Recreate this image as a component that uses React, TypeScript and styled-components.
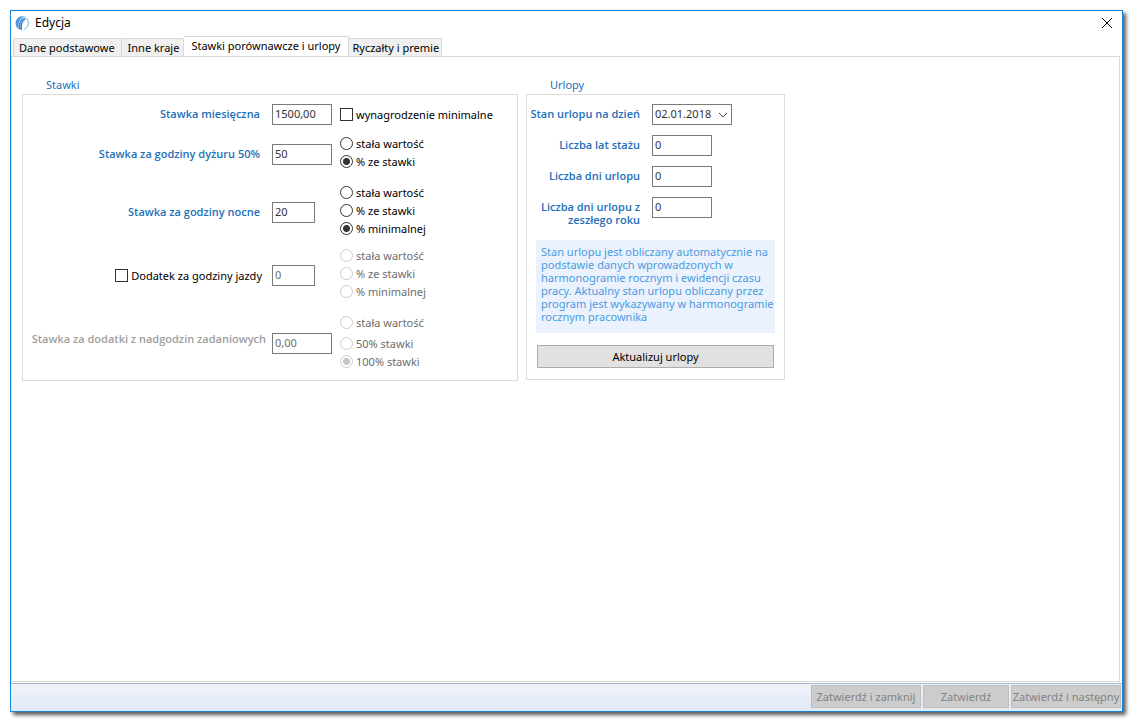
import React from 'react';
import styled, { createGlobalStyle, css } from 'styled-components';

const Global = createGlobalStyle`
  *, *::before, *::after { box-sizing: border-box; }
  body { margin: 0; background: #fff; }
  body, button, input, select { font: 11px/13px "Noto Sans", "Segoe UI", sans-serif; color: #000; }
`;

const Page = styled.div`
  display: flex;
  min-height: 100vh;
  padding: 10px;
`;

const Window = styled.main`
  display: flex;
  flex: 1;
  flex-direction: column;
  min-width: 0;
  background: #fff;
  border: 1px solid #1883d7;
  box-shadow: 3px 3px 4px rgba(0, 0, 0, 0.65);
`;

const TitleBar = styled.header`
  display: flex;
  align-items: center;
  height: 25px;
  padding: 0 9px 1px 4px;
  gap: 6px;
`;

const Title = styled.h1`
  flex: 1;
  margin: 0;
  font-size: 12px;
  line-height: 16px;
  font-weight: 400;
`;

const CloseButton = styled.button`
  display: flex;
  padding: 0;
  border: 0;
  background: none;
`;

const TabList = styled.div`
  display: flex;
  align-items: flex-end;
  padding-left: 2px;
  margin-bottom: -1px;
`;

const Tab = styled.button<{ $active?: boolean; $first?: boolean; $last?: boolean }>`
  height: 19px;
  padding: ${p => (p.$last ? '0 2px 0 3px' : p.$first ? '0 6px 0 5px' : '0 4px 0 6px')};
  border: 1px solid #d9d9d9;
  border-left-width: ${p => (p.$first ? 1 : 0)}px;
  background: #f0f0f0;
  white-space: nowrap;
  ${p =>
    p.$active &&
    css`
      height: 21px;
      padding: 0 8px 2px 7px;
      background: #fff;
      border-bottom-color: #fff;
    `}
`;

const Panel = styled.div`
  display: flex;
  flex: 1;
  flex-wrap: wrap;
  align-items: flex-start;
  align-content: flex-start;
  gap: 8px;
  margin: 0 2px 1px 0;
  padding: 21px 10px;
  border: 1px solid #d9d9d9;
`;

const Group = styled.section<{ $width: number }>`
  width: ${p => p.$width}px;
`;

const GroupTitle = styled.h2`
  margin: 0 0 3px 24px;
  font-size: 11px;
  line-height: 13px;
  font-weight: 400;
  color: #1e6fb8;
`;

const GroupBox = styled.div<{ $bottom: number }>`
  padding: 9px 0 ${p => p.$bottom}px;
  border: 1px solid #dcdcdc;
`;

const RateRow = styled.div<{ $gap?: number }>`
  display: grid;
  grid-template-columns: 249px 68px 1fr;
  align-items: center;
  margin-top: ${p => p.$gap ?? 0}px;
`;

const LeaveRow = styled.div`
  display: grid;
  grid-template-columns: 125px 1fr;
  align-items: start;
  margin-bottom: 10px;
`;

const Label = styled.label<{ $disabled?: boolean }>`
  padding: 0 12px 2px 0;
  font-family: "Open Sans", "Segoe UI", sans-serif;
  font-weight: 600;
  text-align: right;
  color: #1e6fb8;
  ${p =>
    p.$disabled &&
    css`
      padding: 0 6px 10px 0;
      color: #a0a0a0;
    `}
`;

const LeaveLabel = styled(Label)`
  padding-top: 3px;
  padding-bottom: 0;
`;

const Field = styled.input<{ $short?: boolean }>`
  width: ${p => (p.$short ? 43 : 60)}px;
  height: 21px;
  padding: 0 2px 2px;
  border: 1px solid #7a7a7a;
  border-radius: 0;
  background: #fff;
  color: #333;
  &:disabled { color: #6d6d6d; }
`;

const DateWrap = styled.div`
  position: relative;
  width: 80px;
  height: 21px;
`;

const DateSelect = styled.select`
  width: 100%;
  height: 100%;
  padding: 0 2px 2px;
  border: 1px solid #7a7a7a;
  border-radius: 0;
  appearance: none;
  background: #fff;
  color: #333;
`;

const Chevron = styled.svg`
  position: absolute;
  top: 8px;
  right: 4px;
  pointer-events: none;
`;

const Choice = styled.label<{ $disabled?: boolean; $gap?: boolean }>`
  display: flex;
  align-items: center;
  height: 18px;
  gap: 3px;
  margin-top: ${p => (p.$gap ? 3 : 0)}px;
  white-space: nowrap;
  color: ${p => (p.$disabled ? '#6d6d6d' : '#000')};
`;

const SideChoice = styled(Choice)`
  justify-content: flex-end;
  padding-right: 10px;
`;

const RadioList = styled.div`
  padding-bottom: 4px;
`;

const Check = styled.input`
  appearance: none;
  flex: none;
  width: 13px;
  height: 13px;
  margin: 0;
  border: 1px solid #333;
  background: #fff;
  &:checked { background: #333; }
`;

const Radio = styled(Check)`
  border-radius: 50%;
  &:checked {
    background: radial-gradient(circle, #333 0 3px, #fff 4px);
  }
  &:disabled { border-color: #ccc; }
  &:disabled:checked {
    background: radial-gradient(circle, #c4c4c4 0 3px, #fff 4px);
  }
`;

const Note = styled.p`
  margin: 14px 9px 12px;
  padding: 5px 0 10px 5px;
  min-height: 93px;
  background: #ebf2fd;
  color: #4a9be0;
`;

const UpdateButton = styled.button`
  display: block;
  width: calc(100% - 20px);
  height: 23px;
  margin: 0 10px;
  padding: 0;
  border: 1px solid #adadad;
  background: #e1e1e1;
`;

const Footer = styled.footer`
  display: flex;
  justify-content: flex-end;
  gap: 2px;
  height: 28px;
  padding: 1px 1px 0;
  border-top: 1px solid #a9b8c9;
  background: linear-gradient(#f0f3f9, #e0e9f6);
`;

const FooterButton = styled.button<{ $narrow?: boolean }>`
  width: ${p => (p.$narrow ? 86 : 110)}px;
  height: 23px;
  padding: 0;
  border: 1px solid #bfbfbf;
  background: #ccc;
  color: #838383;
  white-space: nowrap;
`;

type Option = { text: string; checked?: boolean; gap?: boolean };

const RadioSet = ({ name, options, disabled }: { name: string; options: Option[]; disabled?: boolean }) => (
  <RadioList role="radiogroup" aria-label={name}>
    {options.map(o => (
      <Choice key={o.text} $disabled={disabled} $gap={o.gap}>
        <Radio type="radio" name={name} defaultChecked={o.checked} disabled={disabled} />
        {o.text}
      </Choice>
    ))}
  </RadioList>
);

const Logo = () => (
  <svg width="14" height="14" viewBox="0 0 14 14" fill="none" aria-hidden="true">
    <path d="M3 12.500C0 10 0 5 2 3C4 0.500 7 0 9 0.500C5 3 3 6 3 12.500Z" fill="#4a97e0" />
    <path d="M3.500 13C3 8 5 4 8.500 2L11 3C8 5 6.500 8 7 14Z" fill="#2a78cc" />
    <path d="M5.300 12.500C5 8.500 6 5.500 9 3.200" stroke="#a9d0f5" strokeWidth="0.800" />
    <path d="M8.500 0.600C11.500 1 13.400 3.800 13.400 7C13.400 10 11.500 12.500 9 13.300" stroke="#7fb2e6" />
  </svg>
);

const leaveFields = [
  ['years', 'Liczba lat stażu'],
  ['days', 'Liczba dni urlopu'],
  ['previous', 'Liczba dni urlopu z zeszłego roku'],
];

export default function App() {
  return (
    <>
      <Global />
      <Page>
        <Window>
          <TitleBar>
            <Logo />
            <Title>Edycja</Title>
            <CloseButton aria-label="Zamknij">
              <svg width="12" height="12" viewBox="0 0 12 12" stroke="#000">
                <path d="M1 1L11 11M11 1L1 11" />
              </svg>
            </CloseButton>
          </TitleBar>
          <TabList role="tablist">
            <Tab role="tab" $first>Dane podstawowe</Tab>
            <Tab role="tab">Inne kraje</Tab>
            <Tab role="tab" aria-selected $active>Stawki porównawcze i urlopy</Tab>
            <Tab role="tab" $last>Ryczałty i premie</Tab>
          </TabList>
          <Panel role="tabpanel">
            <Group $width={496}>
              <GroupTitle>Stawki</GroupTitle>
              <GroupBox $bottom={6}>
                <RateRow>
                  <Label htmlFor="monthly">Stawka miesięczna</Label>
                  <Field id="monthly" defaultValue="1500,00" />
                  <Choice>
                    <Check type="checkbox" />
                    wynagrodzenie minimalne
                  </Choice>
                </RateRow>
                <RateRow $gap={9}>
                  <Label htmlFor="duty">Stawka za godziny dyżuru 50%</Label>
                  <Field id="duty" defaultValue="50" />
                  <RadioSet name="Dyżur" options={[{ text: 'stała wartość' }, { text: '% ze stawki', checked: true }]} />
                </RateRow>
                <RateRow $gap={9}>
                  <Label htmlFor="night">Stawka za godziny nocne</Label>
                  <Field id="night" $short defaultValue="20" />
                  <RadioSet
                    name="Godziny nocne"
                    options={[{ text: 'stała wartość' }, { text: '% ze stawki' }, { text: '% minimalnej', checked: true }]}
                  />
                </RateRow>
                <RateRow $gap={5}>
                  <SideChoice>
                    <Check type="checkbox" />
                    Dodatek za godziny jazdy
                  </SideChoice>
                  <Field aria-label="Dodatek za godziny jazdy" $short disabled defaultValue="0" />
                  <RadioSet
                    name="Godziny jazdy"
                    disabled
                    options={[{ text: 'stała wartość' }, { text: '% ze stawki' }, { text: '% minimalnej' }]}
                  />
                </RateRow>
                <RateRow $gap={9}>
                  <Label htmlFor="overtime" $disabled>Stawka za dodatki z nadgodzin zadaniowych</Label>
                  <Field id="overtime" disabled defaultValue="0,00" />
                  <RadioSet
                    name="Nadgodziny"
                    disabled
                    options={[{ text: 'stała wartość' }, { text: '50% stawki', gap: true }, { text: '100% stawki', checked: true }]}
                  />
                </RateRow>
              </GroupBox>
            </Group>
            <Group $width={259}>
              <GroupTitle>Urlopy</GroupTitle>
              <GroupBox $bottom={11}>
                <LeaveRow>
                  <LeaveLabel htmlFor="date">Stan urlopu na dzień</LeaveLabel>
                  <DateWrap>
                    <DateSelect id="date">
                      <option>02.01.2018</option>
                    </DateSelect>
                    <Chevron width="10" height="6" viewBox="0 0 10 6" fill="none" stroke="#444" aria-hidden="true">
                      <path d="M1 1L5 5L9 1" />
                    </Chevron>
                  </DateWrap>
                </LeaveRow>
                {leaveFields.map(([id, text]) => (
                  <LeaveRow key={id}>
                    <LeaveLabel htmlFor={id}>{text}</LeaveLabel>
                    <Field id={id} defaultValue="0" />
                  </LeaveRow>
                ))}
                <Note>
                  Stan urlopu jest obliczany automatycznie na podstawie danych wprowadzonych w harmonogramie rocznym i
                  ewidencji czasu pracy. Aktualny stan urlopu obliczany przez program jest wykazywany w harmonogramie
                  rocznym pracownika
                </Note>
                <UpdateButton>Aktualizuj urlopy</UpdateButton>
              </GroupBox>
            </Group>
          </Panel>
          <Footer>
            <FooterButton disabled>Zatwierdź i zamknij</FooterButton>
            <FooterButton disabled $narrow>Zatwierdź</FooterButton>
            <FooterButton disabled>Zatwierdź i następny</FooterButton>
          </Footer>
        </Window>
      </Page>
    </>
  );
}
